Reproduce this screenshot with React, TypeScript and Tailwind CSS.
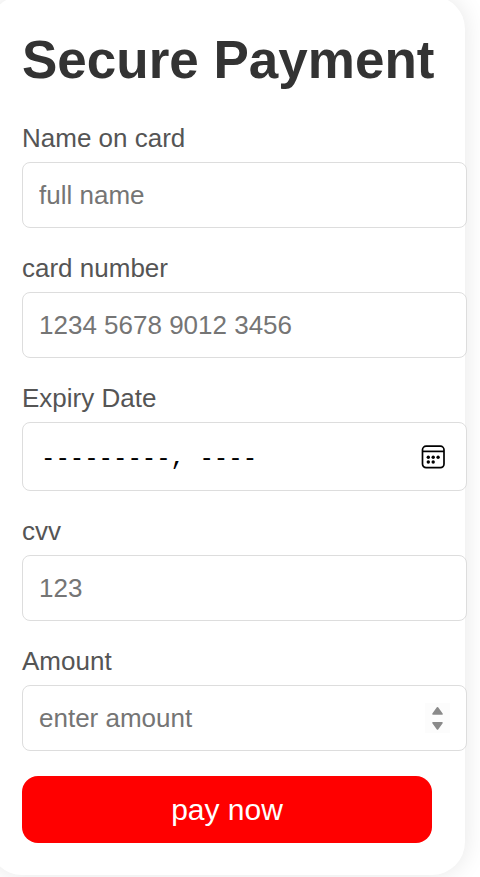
import type { InputHTMLAttributes, ReactNode } from "react";

const inputClass =
  "block w-full appearance-none rounded-lg border border-[#dddddd] bg-white text-black outline-none placeholder:opacity-100 [&::-webkit-inner-spin-button]:appearance-none";

const textClass = "h-[66px] px-4 text-[26px] leading-[30px] placeholder:text-[#757575]";

const dateClass =
  "h-[69px] pt-1 pr-12 pl-[18px] font-['Liberation_Mono',monospace] text-[24px] leading-[30px] placeholder:text-black";

type FieldProps = InputHTMLAttributes<HTMLInputElement> & {
  id: string;
  label: string;
  adornment?: ReactNode;
};

function Field({ id, label, adornment, className = textClass, ...rest }: FieldProps) {
  return (
    <div className="mb-[25px]">
      <label htmlFor={id} className="mb-[9px] block text-[26px] leading-[30px] text-[#555555]">
        {label}
      </label>
      <div className="relative w-[calc(100%+35px)]">
        <input id={id} name={id} className={`${inputClass} ${className}`} {...rest} />
        {adornment}
      </div>
    </div>
  );
}

function CalendarIcon() {
  return (
    <svg
      aria-hidden="true"
      viewBox="0 0 24 24"
      className="pointer-events-none absolute top-[23px] right-[22px] h-6 w-6"
      fill="none"
      stroke="#000"
    >
      <rect x="1.5" y="1.2" width="21.5" height="21.5" rx="3.6" strokeWidth="1.7" />
      <path d="M1.5 6.4H23" strokeWidth="1.7" />
      <g fill="#000" stroke="none">
        <circle cx="7.3" cy="12.2" r="1.7" />
        <circle cx="12.2" cy="12.2" r="1.7" />
        <circle cx="17.1" cy="12.2" r="1.7" />
        <circle cx="7.3" cy="17" r="1.7" />
        <circle cx="12.2" cy="17" r="1.7" />
      </g>
    </svg>
  );
}

function Stepper() {
  return (
    <svg
      aria-hidden="true"
      viewBox="0 0 25 30"
      className="pointer-events-none absolute top-[18px] right-[17px] h-[30px] w-[25px]"
    >
      <rect width="25" height="30" fill="#fcfcfc" />
      <g fill="#8a8a8a" stroke="#8a8a8a" strokeWidth="1.6" strokeLinejoin="round">
        <path d="M12.5 4.8 17 11H8z" />
        <path d="M12.5 26 17 19.8H8z" />
      </g>
    </svg>
  );
}

export default function App() {
  return (
    <main className="min-h-screen overflow-hidden bg-white pb-[2px] font-['Liberation_Sans',Arial,sans-serif]">
      <form
        className="-mt-1 mr-[15px] -ml-[11px] rounded-[33px] bg-white px-[33px] pt-[33px] pb-8 shadow-[0_0_25px_rgba(0,0,0,0.1)]"
        onSubmit={(e) => e.preventDefault()}
      >
        <h1 className="mb-[33px] text-center text-[53px] leading-[61px] font-bold whitespace-nowrap text-[#333333]">
          Secure Payment
        </h1>
        <Field id="name" label="Name on card" type="text" placeholder="full name" />
        <Field id="card" label="card number" type="text" placeholder="1234 5678 9012 3456" />
        <Field
          id="expiry"
          label="Expiry Date"
          type="text"
          placeholder="---------, ----"
          className={dateClass}
          adornment={<CalendarIcon />}
        />
        <Field id="cvv" label="cvv" type="text" placeholder="123" />
        <Field
          id="amount"
          label="Amount"
          type="number"
          placeholder="enter amount"
          adornment={<Stepper />}
        />
        <button
          type="submit"
          className="block h-[67px] w-full cursor-pointer rounded-2xl bg-[#ff0000] text-[30px] leading-8 text-white"
        >
          pay now
        </button>
      </form>
    </main>
  );
}
